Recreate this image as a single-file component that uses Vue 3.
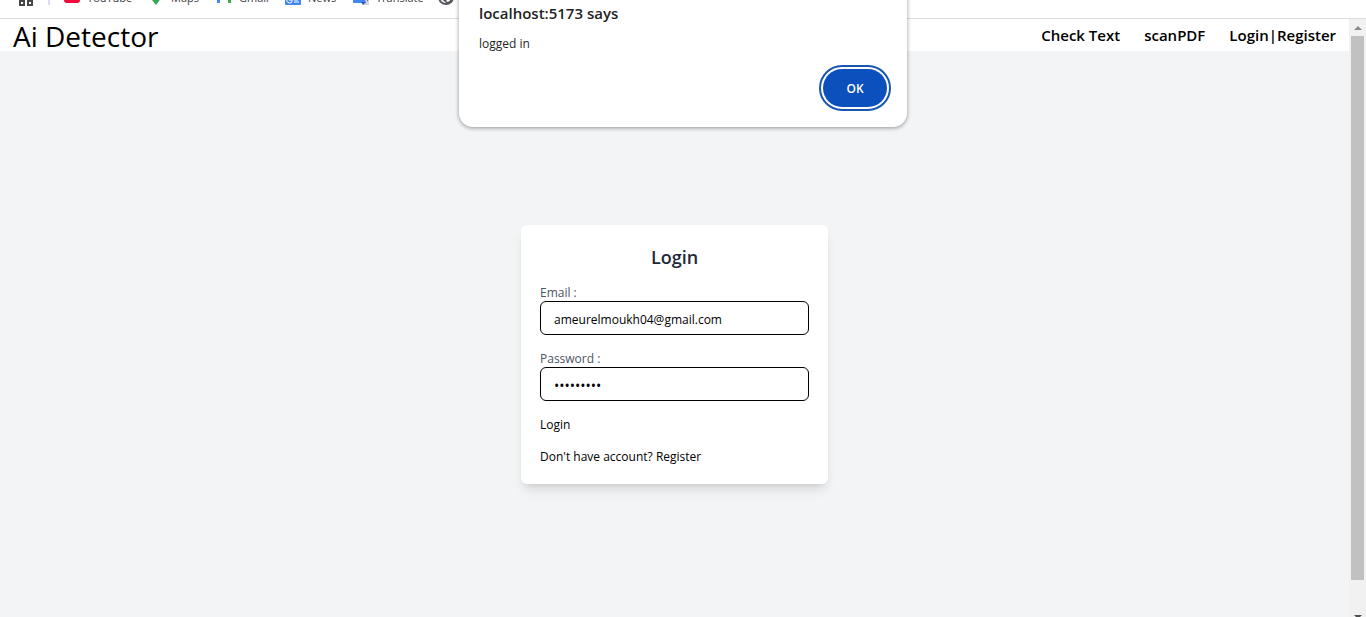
<script setup>
import { ref } from 'vue'

const email = ref('ameurelmoukh04@gmail.com')
const password = ref('secret123')
</script>

<template>
  <div class="browser">
    <nav class="bookmarks" aria-label="Bookmarks">
      <button class="apps" type="button" aria-label="Apps">
        <svg width="16" height="16" viewBox="0 0 16 16" fill="none" stroke="#474747" stroke-width="2">
          <path d="M2 2h4v4H2zM10 2h4v4h-4zM2 10h4v4H2zM10 10h4v4h-4z" />
        </svg>
      </button>
      <span class="divider"></span>
      <a class="mark youtube" href="#">
        <svg width="16" height="16" viewBox="0 0 16 16">
          <rect y="2" width="16" height="12" rx="3" fill="#f5083a" />
          <path d="M6 5l5 3-5 3z" fill="#fff" />
        </svg>
        YouTube
      </a>
      <a class="mark maps" href="#">
        <svg width="16" height="16" viewBox="0 0 16 16">
          <path d="M8 0a6 6 0 0 1 6 6c0 4-4 5-6 10z" fill="#34a853" />
          <path d="M8 0a6 6 0 0 0-6 6c0 2 1 3 2 4l4-4z" fill="#4285f4" />
          <path d="M3 10l6-5 3 1-5 8c-1-2-3-3-4-4z" fill="#fbbc04" />
          <path d="M4 11l4 5 5-7-3-2z" fill="#34a853" />
          <circle cx="8" cy="6" r="2" fill="#fff" />
        </svg>
        Maps
      </a>
      <a class="mark gmail" href="#">
        <svg width="16" height="16" viewBox="0 0 16 16">
          <path d="M1 3v11h3V6z" fill="#4285f4" />
          <path d="M15 3v11h-3V6z" fill="#34a853" />
          <path d="M1 3l7 5 7-5v3l-7 5-7-5z" fill="#ea4335" />
        </svg>
        Gmail
      </a>
      <a class="mark news" href="#">
        <svg width="16" height="16" viewBox="0 0 16 16">
          <path d="M2 0h10v5H2z" fill="#34a853" />
          <rect y="3" width="16" height="13" rx="1" fill="#4285f4" />
          <path d="M7 9a3 3 0 1 0 0 4V11H4M9 9h5M9 11h4M9 13h5" fill="none" stroke="#fff" />
        </svg>
        News
      </a>
      <a class="mark translate" href="#">
        <svg width="16" height="16" viewBox="0 0 16 16">
          <path d="M6 4h9q1 0 1 1v11h-6z" fill="#cfd3da" />
          <path d="M1 0h8l4 14H1q-1 0-1-1V1q0-1 1-1z" fill="#4285f4" />
          <path d="M8 13h5l-3 3z" fill="#3059b8" />
          <path d="M11 8h4M13 7v1l-2 3M12 9l3 3" fill="none" stroke="#6b7280" />
        </svg>
        Translate
      </a>
      <a class="mark globe" href="#" aria-label="Website">
        <svg width="16" height="16" viewBox="0 0 16 16">
          <circle cx="8" cy="8" r="8" fill="#55585c" />
          <path d="M8 14c-1-2-4-2-4-5L2 8c0 4 3 6 6 6zM7 5c2 0 4 1 3 3-1 1 0 2-2 4l2 1c3-2 4-4 3-7L10 3z" fill="#fff" />
        </svg>
      </a>
    </nav>

    <div class="viewport">
      <div class="page">
        <header class="navbar">
          <h1>Ai Detector</h1>
          <nav class="links">
            <a href="#">Check Text</a>
            <a href="#">scanPDF</a>
            <a href="#">Login|Register</a>
          </nav>
        </header>
        <main>
          <form class="card" @submit.prevent>
            <h2>Login</h2>
            <div class="field">
              <label for="email">Email :</label>
              <input id="email" v-model="email" type="email" />
            </div>
            <div class="field">
              <label for="password">Password :</label>
              <input id="password" v-model="password" type="password" />
            </div>
            <button class="submit" type="submit">Login</button>
            <p>Don't have account? <a href="#">Register</a></p>
          </form>
        </main>
      </div>
      <div class="scrollbar" aria-hidden="true">
        <svg width="17" height="17" viewBox="0 0 17 17"><path d="M5 11l4-4 4 4z" fill="#8b8b8b" /></svg>
        <div class="thumb"></div>
        <svg class="down" width="17" height="17" viewBox="0 0 17 17"><path d="M5 0h8L9 4z" fill="#505050" /></svg>
      </div>
    </div>

    <div class="dialog" role="alertdialog" aria-labelledby="dialog-title" aria-describedby="dialog-text">
      <h2 id="dialog-title">localhost:5173 says</h2>
      <p id="dialog-text">logged in</p>
      <button type="button">OK</button>
    </div>
  </div>
</template>

<style>
body {
  margin: 0;
}
</style>

<style scoped>
* {
  box-sizing: border-box;
}
.browser {
  position: relative;
  display: flex;
  flex-direction: column;
  height: 100vh;
  overflow: hidden;
  background: #fff;
  color: #000;
  font: 12px/20px "Segoe UI", "Open Sans", "Noto Sans", sans-serif;
}
h1, h2, p {
  margin: 0;
}
a {
  color: inherit;
  text-decoration: none;
}
button {
  border: 0;
  padding: 0;
  background: none;
  color: inherit;
  font: inherit;
}
.bookmarks {
  display: flex;
  flex: none;
  height: 19px;
  padding-left: 18px;
  border-bottom: 1px solid #dcdddf;
  overflow: hidden;
  color: #3c4043;
  font-size: 11px;
  line-height: 18px;
}
.bookmarks > * {
  flex: none;
  height: 20px;
  margin-top: -11px;
}
.bookmarks svg {
  display: block;
  flex: none;
}
.bookmarks .divider {
  width: 2px;
  height: 16px;
  margin-left: 14px;
  margin-right: 14px;
  background: #d3dcf2;
}
.mark {
  display: flex;
  gap: 7px;
}
.youtube {
  width: 84px;
}
.maps {
  width: 68px;
}
.gmail {
  width: 69px;
}
.news {
  width: 68px;
}
.translate {
  width: 85px;
}
.viewport {
  display: flex;
  flex: 1;
  min-height: 0;
}
.page {
  display: flex;
  flex: 1;
  flex-direction: column;
  background: #f3f4f6;
}
.navbar {
  display: flex;
  align-items: center;
  justify-content: space-between;
  height: 32px;
  padding: 0 13px;
  background: #fff;
}
.navbar h1 {
  padding-top: 2px;
  font-size: 28px;
  font-weight: 400;
  line-height: 32px;
}
.links {
  display: flex;
  gap: 24px;
  font-size: 15px;
  font-weight: 600;
}
main {
  display: flex;
  justify-content: center;
  padding-top: 174px;
}
.card {
  display: flex;
  flex-direction: column;
  align-items: stretch;
  gap: 12px;
  width: 307px;
  padding: 19px 19px 17px;
  border-radius: 6px;
  background: #fff;
  box-shadow: 0 8px 12px -3px rgba(0, 0, 0, 0.12), 0 3px 5px -3px rgba(0, 0, 0, 0.1);
}
.card h2 {
  margin-bottom: 1px;
  color: #1f2937;
  font-size: 18px;
  font-weight: 600;
  line-height: 26px;
  text-align: center;
}
.field {
  display: flex;
  flex-direction: column;
  margin-bottom: 2px;
}
.field label {
  padding-top: 2px;
  color: #4b5563;
  line-height: 16px;
}
.field input {
  height: 34px;
  padding: 2px 13px 0;
  border: 1px solid #000;
  border-radius: 6px;
  outline: 0;
  background: #fff;
  color: #000;
  font: inherit;
}
.field input[type="password"] {
  font-size: 14px;
}
.submit {
  align-self: flex-start;
}
.scrollbar {
  display: flex;
  flex: none;
  flex-direction: column;
  align-items: center;
  width: 17px;
  background: #f1f1f1;
}
.scrollbar svg {
  flex: none;
}
.thumb {
  flex: none;
  width: 13px;
  height: 91%;
  background: #c1c1c1;
}
.scrollbar .down {
  margin-top: 35px;
}
.dialog {
  position: absolute;
  top: -10px;
  left: 50%;
  display: flex;
  flex-direction: column;
  width: 448px;
  padding: 14px 20px 20px;
  border-radius: 0 0 14px 14px;
  background: #fff;
  color: #1f1f1f;
  box-shadow: 0 1px 4px rgba(0, 0, 0, 0.4);
  transform: translateX(-50%);
}
.dialog h2 {
  font-size: 15px;
  font-weight: 600;
  line-height: 18px;
}
.dialog p {
  margin-top: 12px;
}
.dialog button {
  align-self: flex-end;
  width: 64px;
  height: 38px;
  margin-top: 15px;
  padding-top: 2px;
  border-radius: 20px;
  outline: 2px solid #1857b0;
  outline-offset: 2px;
  background: #0b50bd;
  color: #fff;
  font-weight: 600;
}
</style>
